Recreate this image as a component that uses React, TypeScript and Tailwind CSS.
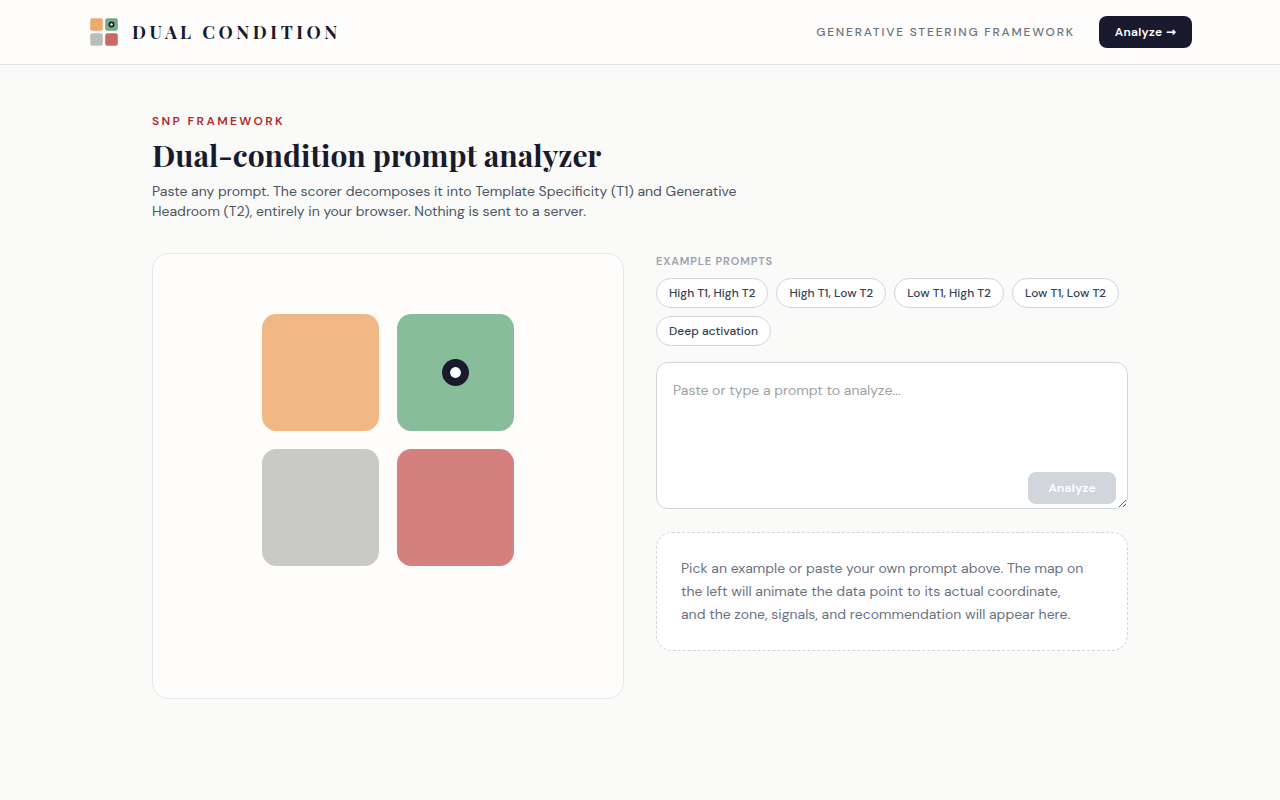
import { useState } from 'react';

const EXAMPLES = [
  { label: 'High T1, High T2', prompt: 'Write a 14-line sonnet in which every image comes from a machine that has never been built.' },
  { label: 'High T1, Low T2', prompt: 'Return a JSON object with exactly three keys: name, date, total.' },
  { label: 'Low T1, High T2', prompt: 'Explore what silence might mean to a city.' },
  { label: 'Low T1, Low T2', prompt: 'Tell me something.' },
  { label: 'Deep activation', prompt: 'Hold two contradictory readings of this scene at once and let neither of them win.' },
];

const ZONES = [
  { id: 'constrained', x: 2, y: 2, fill: '#f1b886', logoFill: '#eea96e' },
  { id: 'dual', x: 17, y: 2, fill: '#88bd9b', logoFill: '#6fae87' },
  { id: 'idle', x: 2, y: 17, fill: '#c9c9c7', logoFill: '#bdbdbb' },
  { id: 'drift', x: 17, y: 17, fill: '#d4807e', logoFill: '#cb6967' },
];

function Logo() {
  return (
    <svg viewBox="0 0 32 32" className="h-8 w-8" aria-hidden="true">
      {ZONES.map((zone) => (
        <rect key={zone.id} x={zone.x + 0.2} y={zone.y + 0.2} width="12.6" height="12.6" rx="2" fill={zone.logoFill} />
      ))}
      <circle cx="23.5" cy="8.5" r="3" fill="#1a1a2e" />
      <circle cx="23.5" cy="8.5" r="1.2" fill="#ffffff" />
    </svg>
  );
}

function ZoneMap() {
  return (
    <svg viewBox="0 0 32 32" className="w-72 max-w-full" role="img" aria-label="Zone map">
      {ZONES.map((zone) => (
        <rect key={zone.id} x={zone.x} y={zone.y} width="13" height="13" rx="1.6" fill={zone.fill} />
      ))}
      <circle cx="23.5" cy="8.5" r="1.5" fill="#1a1a2e" />
      <circle cx="23.5" cy="8.5" r="0.6" fill="#ffffff" />
    </svg>
  );
}

export default function App() {
  const [prompt, setPrompt] = useState('');

  return (
    <div className="min-h-screen bg-[#fafaf8] font-['DM_Sans','Open_Sans',sans-serif] text-[#1a1a2e]">
      <header className="border-b border-[#e1e3e5] bg-[#fefdfc]">
        <div className="mx-auto flex h-16 max-w-6xl items-center justify-between px-6">
          <a href="#" className="flex items-center gap-3">
            <Logo />
            <span className="font-['Playfair_Display','Liberation_Serif',serif] text-lg font-bold tracking-[0.2em] whitespace-nowrap">
              DUAL CONDITION
            </span>
          </a>
          <div className="flex items-center gap-6">
            <span className="text-xs font-medium tracking-[0.15em] text-gray-500">GENERATIVE STEERING FRAMEWORK</span>
            <a
              href="#prompt"
              className="rounded-lg bg-[#1a1a2e] px-4 py-2 text-xs font-semibold tracking-wide text-white"
            >
              Analyze <span className="font-['DejaVu_Sans',sans-serif] leading-none">→</span>
            </a>
          </div>
        </div>
      </header>

      <main className="mx-auto max-w-5xl px-6 py-12">
        <p className="text-xs font-semibold tracking-[0.2em] text-[#b02a2a]">SNP FRAMEWORK</p>
        <h1 className="mt-2 font-['Playfair_Display','Liberation_Serif',serif] text-3xl font-bold">
          Dual-condition prompt analyzer
        </h1>
        <p className="mt-2 mb-8 max-w-[640px] text-sm text-gray-600">
          Paste any prompt. The scorer decomposes it into Template Specificity (T1) and Generative Headroom (T2),
          entirely in your browser. Nothing is sent to a server.
        </p>

        <div className="grid items-start gap-8 md:grid-cols-2">
          <section className="flex justify-center rounded-2xl border border-[#e5e7eb] bg-[#fefdfc] px-6 pt-[42px] pb-[114px]">
            <ZoneMap />
          </section>

          <section>
            <h2 className="mb-2 text-[11px] leading-[17px] font-semibold tracking-[0.08em] text-gray-400">
              EXAMPLE PROMPTS
            </h2>
            <div className="mb-4 flex flex-wrap gap-2">
              {EXAMPLES.map((example) => (
                <button
                  key={example.label}
                  type="button"
                  onClick={() => setPrompt(example.prompt)}
                  className="cursor-pointer rounded-full border border-gray-300 bg-white px-3 py-1.5 text-xs font-medium text-gray-700 hover:border-gray-500"
                >
                  {example.label}
                </button>
              ))}
            </div>

            <div className="relative pb-[7px]">
              <textarea
                id="prompt"
                aria-label="Prompt"
                value={prompt}
                onChange={(e) => setPrompt(e.target.value)}
                placeholder="Paste or type a prompt to analyze..."
                className="block h-[147px] w-full resize-y rounded-xl border border-gray-300 bg-white p-4 text-sm leading-[23px] placeholder:text-neutral-400"
              />
              <button
                type="button"
                disabled={!prompt.trim()}
                className="absolute right-3 bottom-3 rounded-lg bg-[#1a1a2e] px-5 py-2 text-xs font-semibold tracking-wide text-white disabled:bg-gray-300"
              >
                Analyze
              </button>
            </div>

            <div className="mt-4 rounded-2xl border border-dashed border-gray-300 bg-white p-6 text-sm leading-[23px] text-gray-500">
              Pick an example or paste your own prompt above. The map on the left will animate the data point to its
              actual coordinate, and&nbsp;the zone, signals, and recommendation will appear here.
            </div>
          </section>
        </div>
      </main>
    </div>
  );
}
